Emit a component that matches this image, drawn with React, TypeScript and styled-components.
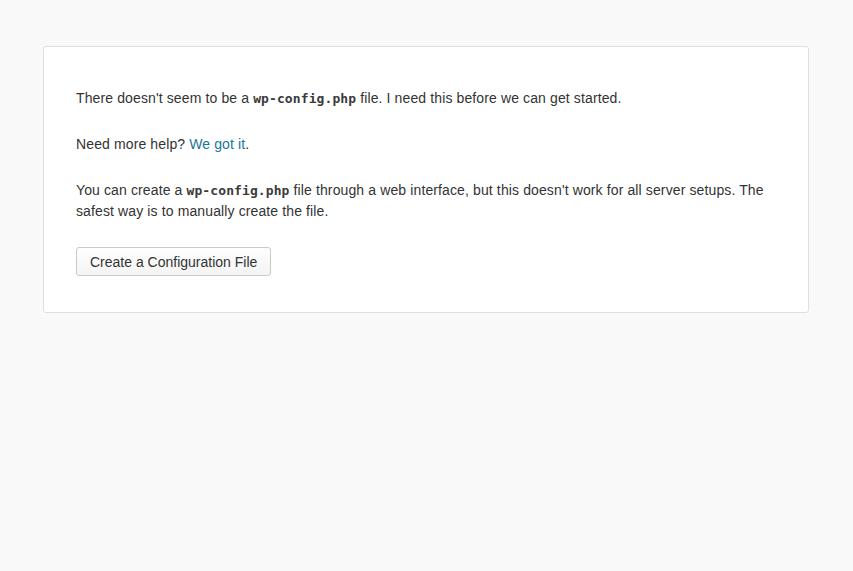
import React from 'react';
import styled, { createGlobalStyle } from 'styled-components';

const GlobalStyle = createGlobalStyle`
  html {
    background: #f9f9f9;
  }
  body {
    margin: 0;
    padding: 46px 1px 0 0;
    background: #f9f9f9;
    font-family: "Liberation Sans", Arial, sans-serif;
  }
`;

const Card = styled.div`
  box-sizing: content-box;
  max-width: 700px;
  margin: 0 auto;
  padding: 41px 32px 36px;
  background: #fff;
  border: 1px solid #dfdfdf;
  border-radius: 3px;
  color: #333;
`;

const Para = styled.p`
  margin: 0 0 25px;
  font-size: 14px;
  line-height: 21px;
  letter-spacing: 0.12px;
`;

const Code = styled.code`
  font-family: "DejaVu Sans Mono", monospace;
  font-size: 13px;
  font-weight: bold;
  letter-spacing: 0.1px;
  color: #3a3a3a;
`;

const Link = styled.a`
  color: #21759b;
  text-decoration: none;
`;

const Actions = styled.div`
  display: flex;
`;

const Button = styled.button`
  height: 29px;
  padding: 0 13px;
  font-family: "Liberation Sans", Arial, sans-serif;
  font-size: 14px;
  color: #333;
  background: linear-gradient(to bottom, #fefefe, #f4f4f4);
  border: 1px solid #c9c9c9;
  border-radius: 3px;
  cursor: pointer;
`;

export default function App() {
  return (
    <>
      <GlobalStyle />
      <Card>
        <Para>
          There doesn't seem to be a <Code>wp-config.php</Code> file. I need this before we can get started.
        </Para>
        <Para>
          Need more help? <Link href="#">We got it</Link>.
        </Para>
        <Para>
          You can create a <Code>wp-config.php</Code> file through a web interface, but this doesn't work for all server setups. The safest way is to manually create the file.
        </Para>
        <Actions>
          <Button>Create a Configuration File</Button>
        </Actions>
      </Card>
    </>
  );
}
